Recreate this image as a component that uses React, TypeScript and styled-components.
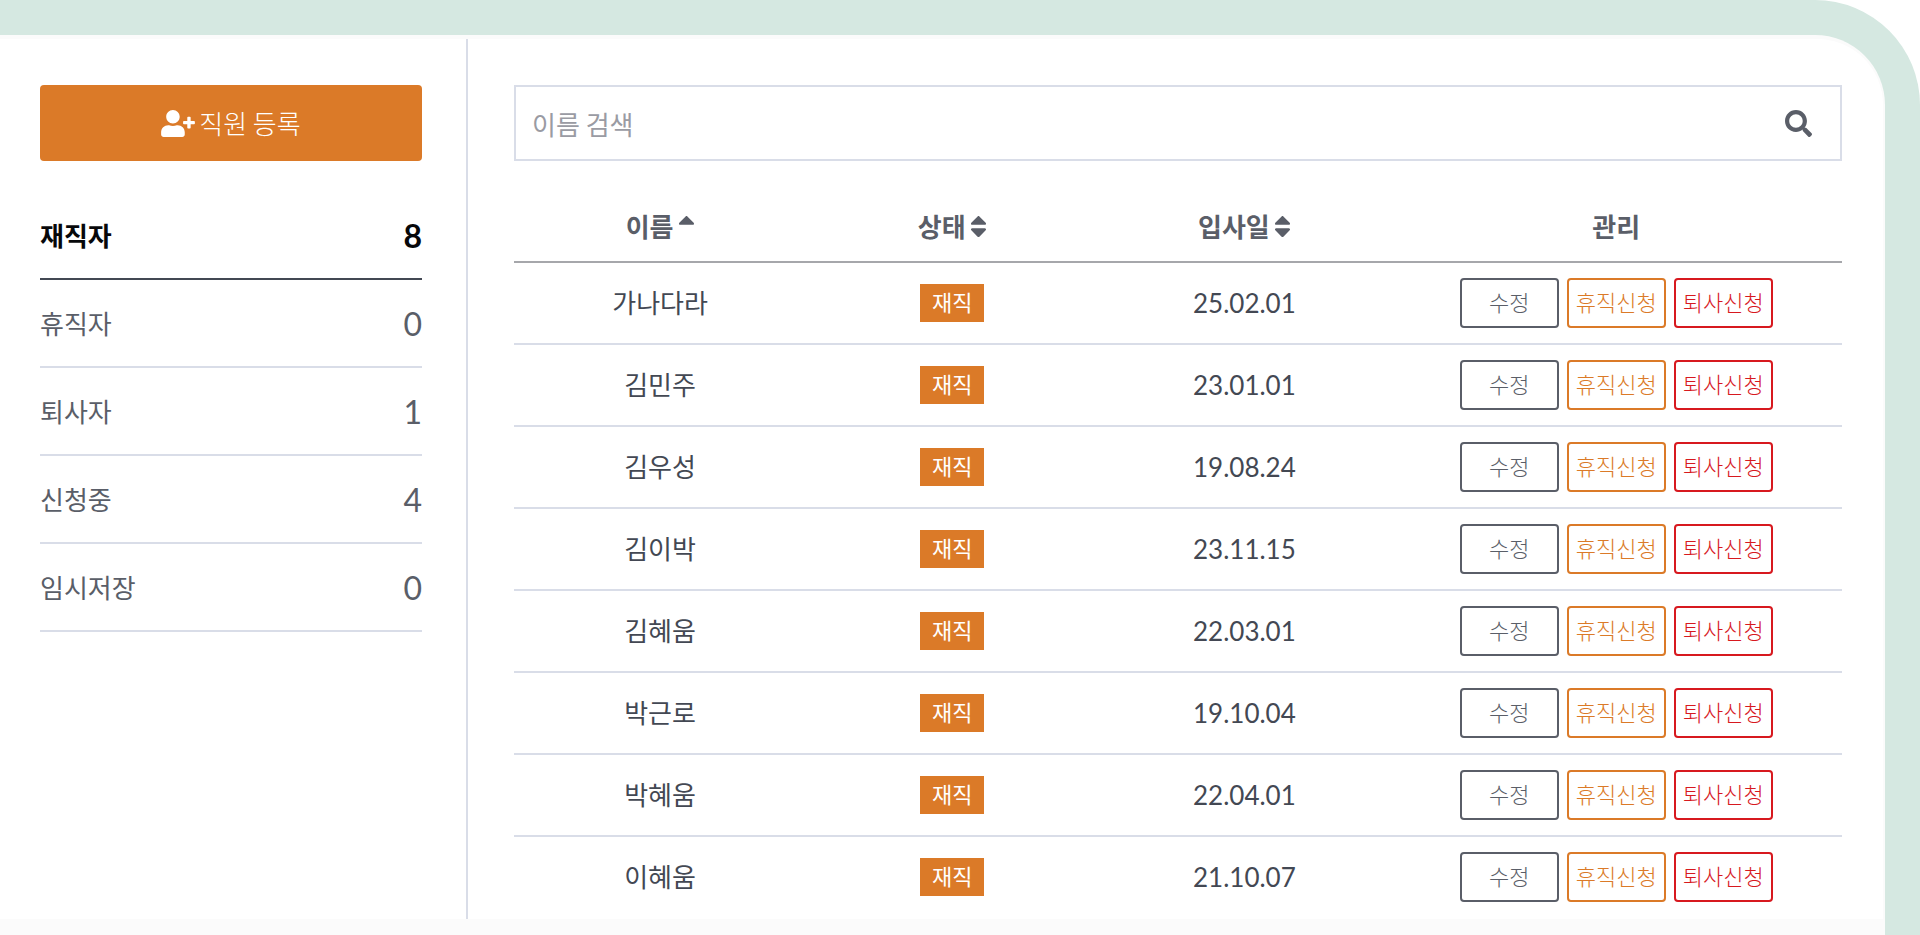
import React, { useState } from "react";
import styled, { createGlobalStyle, css } from "styled-components";
import { FaSearch, FaSort, FaSortUp, FaUserPlus } from "react-icons/fa";

const color = {
  mint: "#d5e8e1",
  haze: "#fbfbfb",
  surface: "#ffffff",
  orange: "#db7a28",
  red: "#d7191f",
  ink: "#434853",
  muted: "#5a5e68",
  line: "#d9dde8",
  headLine: "#a6a7ab",
  placeholder: "#9a9ba3",
};

const korean = `"Noto Sans CJK KR", sans-serif`;

const GlobalStyle = createGlobalStyle`
  *, *::before, *::after { box-sizing: border-box; }
  body {
    margin: 0;
    background: #ffffff;
    color: ${color.ink};
    font-family: Lato, ${korean};
    font-size: 26px;
    line-height: 38px;
  }
  button, input { font: inherit; }
`;

const Frame = styled.div`
  display: flex;
  min-height: 100vh;
  padding: 35px 35px 0 0;
  background: ${color.mint};
  border-top-right-radius: 105px;
`;

const Panel = styled.div`
  flex: 1;
  min-width: 0;
  padding: 4px 2px 16px 0;
  background: ${color.haze};
  border-top-right-radius: 70px;
`;

const Content = styled.div`
  display: flex;
  background: ${color.surface};
  border-top-right-radius: 66px;
`;

const Sidebar = styled.aside`
  flex: none;
  width: 468px;
  padding: 46px 44px 0 40px;
  border-right: 2px solid ${color.line};
`;

const RegisterButton = styled.button`
  display: flex;
  align-items: center;
  justify-content: center;
  gap: 4px;
  width: 100%;
  height: 76px;
  padding: 0;
  border: 0;
  border-radius: 4px;
  background: ${color.orange};
  color: #ffffff;
  font-family: ${korean};
  font-weight: 300;
  cursor: pointer;

  svg {
    width: 34px;
    height: 27px;
  }
`;

const StatusList = styled.ul`
  margin: 31px 0 0;
  padding: 0;
  list-style: none;
`;

const StatusLink = styled.a<{ $active: boolean }>`
  display: flex;
  align-items: center;
  justify-content: space-between;
  height: 88px;
  padding-top: 2px;
  border-bottom: 2px solid ${color.line};
  color: ${color.muted};
  text-decoration: none;
  ${(p) =>
    p.$active &&
    css`
      border-color: ${color.ink};
      color: #07080a;
      font-weight: 700;
    `}
`;

const Count = styled.span`
  font-size: 32px;
`;

const Main = styled.main`
  flex: 1;
  min-width: 0;
  padding: 46px 41px 0 46px;
`;

const SearchForm = styled.form`
  display: flex;
  align-items: center;
  height: 76px;
  border: 2px solid ${color.line};
`;

const SearchInput = styled.input`
  flex: 1;
  min-width: 0;
  height: 100%;
  padding: 0 16px;
  border: 0;
  outline: 0;
  background: transparent;
  color: ${color.ink};
  font-family: ${korean};

  &::placeholder {
    color: ${color.placeholder};
    opacity: 1;
  }
`;

const SearchButton = styled.button`
  display: flex;
  padding: 0 28px;
  border: 0;
  background: transparent;
  color: ${color.muted};
  cursor: pointer;

  svg {
    width: 27px;
    height: 27px;
  }
`;

const Table = styled.table`
  width: 100%;
  margin-top: 31px;
  border-spacing: 0;
  table-layout: fixed;
  text-align: center;
`;

const HeadCell = styled.th<{ $width: string }>`
  width: ${(p) => p.$width};
  height: 71px;
  padding: 0;
  border-bottom: 2px solid ${color.headLine};
  color: ${color.muted};
  font-weight: 700;
`;

const SortButton = styled.button`
  display: inline-flex;
  align-items: center;
  gap: 4px;
  padding: 0;
  border: 0;
  background: transparent;
  color: inherit;
  cursor: pointer;

  svg {
    width: 17px;
    height: 27px;
  }
`;

const Cell = styled.td`
  height: 82px;
  padding: 0;
  border-bottom: 2px solid ${color.line};

  tr:last-child > & {
    border-bottom-color: transparent;
  }
`;

const Badge = styled.span`
  display: block;
  width: 64px;
  margin: 0 auto;
  background: ${color.orange};
  color: #ffffff;
  font-size: 22px;
`;

const Actions = styled.div`
  display: flex;
  justify-content: center;
  gap: 8px;
`;

const ActionButton = styled.button<{ $tone: string }>`
  width: 99px;
  height: 50px;
  padding: 0;
  border: 2px solid ${(p) => p.$tone};
  border-radius: 4px;
  background: #ffffff;
  color: ${(p) => p.$tone};
  font-size: 22px;
  font-weight: 300;
  white-space: nowrap;
  cursor: pointer;
`;

const statuses = [
  { label: "재직자", count: 8 },
  { label: "휴직자", count: 0 },
  { label: "퇴사자", count: 1 },
  { label: "신청중", count: 4 },
  { label: "임시저장", count: 0 },
];

const employees = [
  { name: "가나다라", joined: "25.02.01" },
  { name: "김민주", joined: "23.01.01" },
  { name: "김우성", joined: "19.08.24" },
  { name: "김이박", joined: "23.11.15" },
  { name: "김혜움", joined: "22.03.01" },
  { name: "박근로", joined: "19.10.04" },
  { name: "박혜움", joined: "22.04.01" },
  { name: "이혜움", joined: "21.10.07" },
];

const actions = [
  { label: "수정", tone: color.muted },
  { label: "휴직신청", tone: color.orange },
  { label: "퇴사신청", tone: color.red },
];

export default function App() {
  const [active, setActive] = useState("재직자");
  const [query, setQuery] = useState("");
  const visible = employees.filter((e) => e.name.includes(query.trim()));

  return (
    <>
      <GlobalStyle />
      <Frame>
        <Panel>
          <Content>
            <Sidebar>
              <RegisterButton type="button">
                <FaUserPlus aria-hidden />
                직원 등록
              </RegisterButton>
              <nav>
                <StatusList>
                  {statuses.map((s) => (
                    <li key={s.label}>
                      <StatusLink
                        href="#"
                        $active={s.label === active}
                        onClick={(e) => {
                          e.preventDefault();
                          setActive(s.label);
                        }}
                      >
                        <span>{s.label}</span>
                        <Count>{s.count}</Count>
                      </StatusLink>
                    </li>
                  ))}
                </StatusList>
              </nav>
            </Sidebar>
            <Main>
              <SearchForm role="search" onSubmit={(e) => e.preventDefault()}>
                <SearchInput
                  type="text"
                  aria-label="이름 검색"
                  placeholder="이름 검색"
                  value={query}
                  onChange={(e) => setQuery(e.target.value)}
                />
                <SearchButton type="submit" aria-label="검색">
                  <FaSearch aria-hidden />
                </SearchButton>
              </SearchForm>
              <Table>
                <thead>
                  <tr>
                    <HeadCell $width="22%" scope="col" aria-sort="ascending">
                      <SortButton type="button">
                        이름
                        <FaSortUp aria-hidden />
                      </SortButton>
                    </HeadCell>
                    <HeadCell $width="22%" scope="col">
                      <SortButton type="button">
                        상태
                        <FaSort aria-hidden />
                      </SortButton>
                    </HeadCell>
                    <HeadCell $width="22%" scope="col">
                      <SortButton type="button">
                        입사일
                        <FaSort aria-hidden />
                      </SortButton>
                    </HeadCell>
                    <HeadCell $width="34%" scope="col">
                      관리
                    </HeadCell>
                  </tr>
                </thead>
                <tbody>
                  {visible.map((e) => (
                    <tr key={e.name}>
                      <Cell>{e.name}</Cell>
                      <Cell>
                        <Badge>재직</Badge>
                      </Cell>
                      <Cell>{e.joined}</Cell>
                      <Cell>
                        <Actions>
                          {actions.map((a) => (
                            <ActionButton key={a.label} type="button" $tone={a.tone}>
                              {a.label}
                            </ActionButton>
                          ))}
                        </Actions>
                      </Cell>
                    </tr>
                  ))}
                </tbody>
              </Table>
            </Main>
          </Content>
        </Panel>
      </Frame>
    </>
  );
}
